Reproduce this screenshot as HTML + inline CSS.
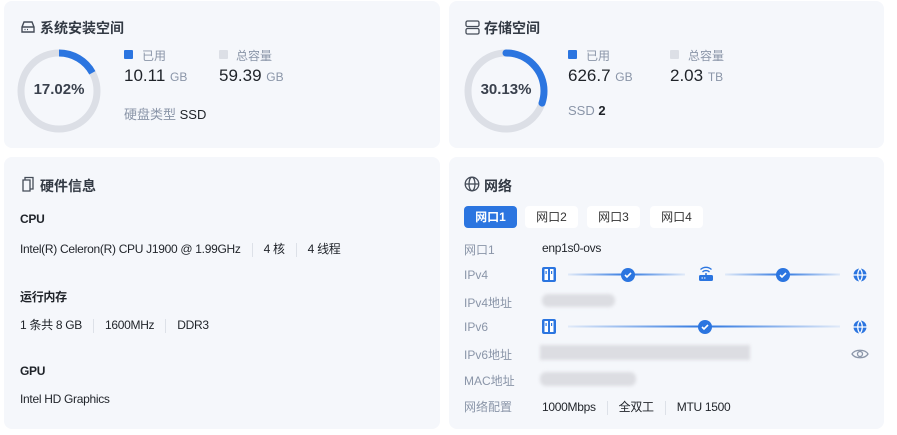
<!DOCTYPE html>
<html><head><meta charset="utf-8"><style>
*{margin:0;padding:0;box-sizing:border-box}
body{width:897px;height:435px;background:#fff;font-family:"Liberation Sans","Noto Sans CJK SC",sans-serif;position:relative;overflow:hidden;color:#1f2329}
.card{position:absolute;background:#f5f7fb;border-radius:8px}
.a{position:absolute;white-space:nowrap}
.t{font-size:14px;font-weight:bold;color:#333a44}
.lab{font-size:12px;color:#8a95a8}
.big{font-size:17px;color:#1f2329}
.u{font-size:12px;color:#8a95a8}
.s{font-size:12px;color:#1f2329;letter-spacing:-0.3px}
.sep{display:inline-block;width:1px;height:14px;background:#dde1e8;vertical-align:middle;margin:0 11px}
.tab{position:absolute;top:206px;height:22px;width:53px;border-radius:4px;background:#fff;font-size:12px;color:#333;text-align:center;line-height:22px}
.blur{position:absolute;background:#dcdde2;border-radius:6px;filter:blur(1.5px)}
</style></head><body>
<div class="card" style="left:4px;top:1px;width:436px;height:147px"></div>
<div class="card" style="left:449px;top:1px;width:435px;height:147px"></div>
<div class="card" style="left:4px;top:157px;width:436px;height:272px"></div>
<div class="card" style="left:449px;top:157px;width:435px;height:272px"></div>

<svg class="a" style="left:20px;top:20px" width="16" height="14" viewBox="0 0 16 14"><path d="M2 7 L4 2 H12 L14 7 V12 H2 Z M2 7 H14" fill="none" stroke="#454c58" stroke-width="1.4"/><path d="M4.5 9.5h1M7 9.5h1" stroke="#454c58" stroke-width="1.2"/></svg>
<div class="a t" style="left:40px;top:18px">系统安装空间</div>
<svg class="a" style="left:17px;top:49px" width="84" height="84"><circle cx="42" cy="42" r="38" fill="none" stroke="#dcdfe6" stroke-width="7"/><circle cx="42" cy="42" r="38" fill="none" stroke="#2b75e0" stroke-width="7" stroke-dasharray="40.6 300" transform="rotate(-90 42 42)"/></svg>
<div class="a" style="left:17px;top:81px;width:84px;text-align:center;font-size:15px;font-weight:bold;color:#3a414d">17.02%</div>
<div class="a" style="left:124px;top:50px;width:9px;height:9px;background:#2b75e0;border-radius:1px"></div>
<div class="a lab" style="left:142px;top:47px">已用</div>
<div class="a big" style="left:124px;top:66px">10.11 <span class="u">GB</span></div>
<div class="a" style="left:219px;top:50px;width:9px;height:9px;background:#dcdfe6;border-radius:1px"></div>
<div class="a lab" style="left:236px;top:47px">总容量</div>
<div class="a big" style="left:219px;top:66px">59.39 <span class="u">GB</span></div>
<div class="a" style="left:124px;top:104px;font-size:13px;color:#8a95a8">硬盘类型 <span style="color:#1f2329">SSD</span></div>

<svg class="a" style="left:465px;top:20px" width="15" height="15" viewBox="0 0 15 15"><rect x="1" y="1" width="13" height="5.5" rx="1.5" fill="none" stroke="#454c58" stroke-width="1.3"/><rect x="1" y="8.5" width="13" height="5.5" rx="1.5" fill="none" stroke="#454c58" stroke-width="1.3"/></svg>
<div class="a t" style="left:484px;top:18px">存储空间</div>
<svg class="a" style="left:464px;top:49px" width="84" height="84"><circle cx="42" cy="42" r="38" fill="none" stroke="#dcdfe6" stroke-width="7"/><circle cx="42" cy="42" r="38" fill="none" stroke="#2b75e0" stroke-width="7" stroke-dasharray="71.9 300" stroke-linecap="round" transform="rotate(-90 42 42)"/></svg>
<div class="a" style="left:464px;top:81px;width:84px;text-align:center;font-size:15px;font-weight:bold;color:#3a414d">30.13%</div>
<div class="a" style="left:568px;top:50px;width:9px;height:9px;background:#2b75e0;border-radius:1px"></div>
<div class="a lab" style="left:586px;top:47px">已用</div>
<div class="a big" style="left:568px;top:66px">626.7 <span class="u">GB</span></div>
<div class="a" style="left:670px;top:50px;width:9px;height:9px;background:#dcdfe6;border-radius:1px"></div>
<div class="a lab" style="left:688px;top:47px">总容量</div>
<div class="a big" style="left:670px;top:66px">2.03 <span class="u">TB</span></div>
<div class="a" style="left:568px;top:103px;font-size:13px;color:#8a95a8">SSD <span style="color:#1f2329;font-weight:bold">2</span></div>

<svg class="a" style="left:21px;top:176px" width="14" height="16" viewBox="0 0 14 16"><path d="M2 4 H9 V15 H2 Z M4 4 V1.5 H12 V13 H9" fill="none" stroke="#454c58" stroke-width="1.3"/></svg>
<div class="a t" style="left:40px;top:176px">硬件信息</div>
<div class="a s" style="left:20px;top:212px;font-weight:bold">CPU</div>
<div class="a s" style="left:20px;top:240px">Intel(R) Celeron(R) CPU J1900 @ 1.99GHz<span class="sep"></span>4 核<span class="sep"></span>4 线程</div>
<div class="a s" style="left:20px;top:288px;font-weight:bold">运行内存</div>
<div class="a s" style="left:20px;top:316px">1 条共 8 GB<span class="sep"></span>1600MHz<span class="sep"></span>DDR3</div>
<div class="a s" style="left:20px;top:364px;font-weight:bold">GPU</div>
<div class="a s" style="left:20px;top:392px">Intel HD Graphics</div>

<svg class="a" style="left:464px;top:176px" width="16" height="16" viewBox="0 0 16 16" fill="none" stroke="#454c58" stroke-width="1.3"><circle cx="8" cy="8" r="6.8"/><ellipse cx="8" cy="8" rx="3" ry="6.8"/><path d="M1.2 8H14.8"/></svg>
<div class="a t" style="left:484px;top:176px">网络</div>
<div class="tab" style="left:464px;background:#2b75e0;color:#fff;font-weight:bold">网口1</div>
<div class="tab" style="left:525px">网口2</div>
<div class="tab" style="left:587px">网口3</div>
<div class="tab" style="left:650px">网口4</div>

<div class="a lab" style="left:464px;top:241px">网口1</div>
<div class="a s" style="left:542px;top:241px">enp1s0-ovs</div>
<div class="a lab" style="left:464px;top:268px">IPv4</div>
<div class="a lab" style="left:464px;top:294px">IPv4地址</div>
<div class="a lab" style="left:464px;top:320px">IPv6</div>
<div class="a lab" style="left:464px;top:346px">IPv6地址</div>
<div class="a lab" style="left:464px;top:372px">MAC地址</div>
<div class="a lab" style="left:464px;top:398px">网络配置</div>
<div class="a s" style="left:542px;top:398px">1000Mbps<span class="sep"></span>全双工<span class="sep"></span>MTU 1500</div>

<svg class="a" style="left:530px;top:260px" width="350" height="80">
<defs>
<linearGradient id="l" x1="0" x2="1"><stop offset="0" stop-color="#2b75e0" stop-opacity="0.1"/><stop offset="1" stop-color="#2b75e0"/></linearGradient>
<linearGradient id="r" x1="0" x2="1"><stop offset="0" stop-color="#2b75e0"/><stop offset="1" stop-color="#2b75e0" stop-opacity="0.1"/></linearGradient>
<g id="srv"><rect x="0" y="0" width="14" height="15" rx="2" fill="#2b75e0"/><rect x="2.5" y="2" width="3.5" height="11" fill="#fff"/><rect x="8" y="2" width="3.5" height="11" fill="#fff"/><rect x="3.5" y="4" width="1.2" height="3" fill="#2b75e0"/><rect x="9" y="4" width="1.2" height="3" fill="#2b75e0"/></g>
<g id="chk"><circle r="7" fill="#2b75e0"/><path d="M-3 0 L-1 2 L3 -2" stroke="#fff" stroke-width="1.6" fill="none"/></g>
<g id="glb" fill="none" stroke="#2b75e0" stroke-width="2"><circle r="6.5" fill="#2b75e0" stroke="none"/><path d="M0 -6.5 C-3 -3 -3 3 0 6.5 C3 3 3 -3 0 -6.5 M-6.5 0 H6.5" stroke="#fff" stroke-width="1.3"/></g>
</defs>
<use href="#srv" x="12" y="7"/>
<rect x="38" y="13.5" width="60" height="2" fill="url(#l)"/><rect x="98" y="13.5" width="57" height="2" fill="url(#r)"/>
<use href="#chk" x="98" y="15"/>
<g transform="translate(176,15)" fill="#2b75e0"><rect x="-7" y="0" width="14" height="6" rx="1.5"/><path d="M-3.5 -3 A5 5 0 0 1 3.5 -3" stroke="#2b75e0" stroke-width="1.3" fill="none"/><path d="M-5.5 -5.5 A8 8 0 0 1 5.5 -5.5" stroke="#2b75e0" stroke-width="1.3" fill="none"/><circle cx="0" cy="-1" r="1"/><rect x="-4.5" y="2.5" width="1.5" height="1" fill="#fff"/><rect x="-2" y="2.5" width="1.5" height="1" fill="#fff"/></g>
<rect x="195" y="13.5" width="58" height="2" fill="url(#l)"/><rect x="253" y="13.5" width="57" height="2" fill="url(#r)"/>
<use href="#chk" x="253" y="15"/>
<use href="#glb" x="330" y="15"/>
<use href="#srv" x="12" y="59"/>
<rect x="38" y="65.5" width="137" height="2" fill="url(#l)"/><rect x="175" y="65.5" width="135" height="2" fill="url(#r)"/>
<use href="#chk" x="175" y="67"/>
<use href="#glb" x="330" y="67"/>
</svg>
<div class="blur" style="left:542px;top:294px;width:73px;height:13px"></div>
<div class="blur" style="left:540px;top:345px;width:210px;height:15px;border-radius:0"></div>
<div class="blur" style="left:540px;top:372px;width:96px;height:14px"></div>
<svg class="a" style="left:851px;top:348px" width="18" height="12" viewBox="0 0 18 12" fill="none" stroke="#8a95a8" stroke-width="1.3"><path d="M1 6 C4 1 14 1 17 6 C14 11 4 11 1 6Z"/><circle cx="9" cy="6" r="2.5"/></svg>
</body></html>
